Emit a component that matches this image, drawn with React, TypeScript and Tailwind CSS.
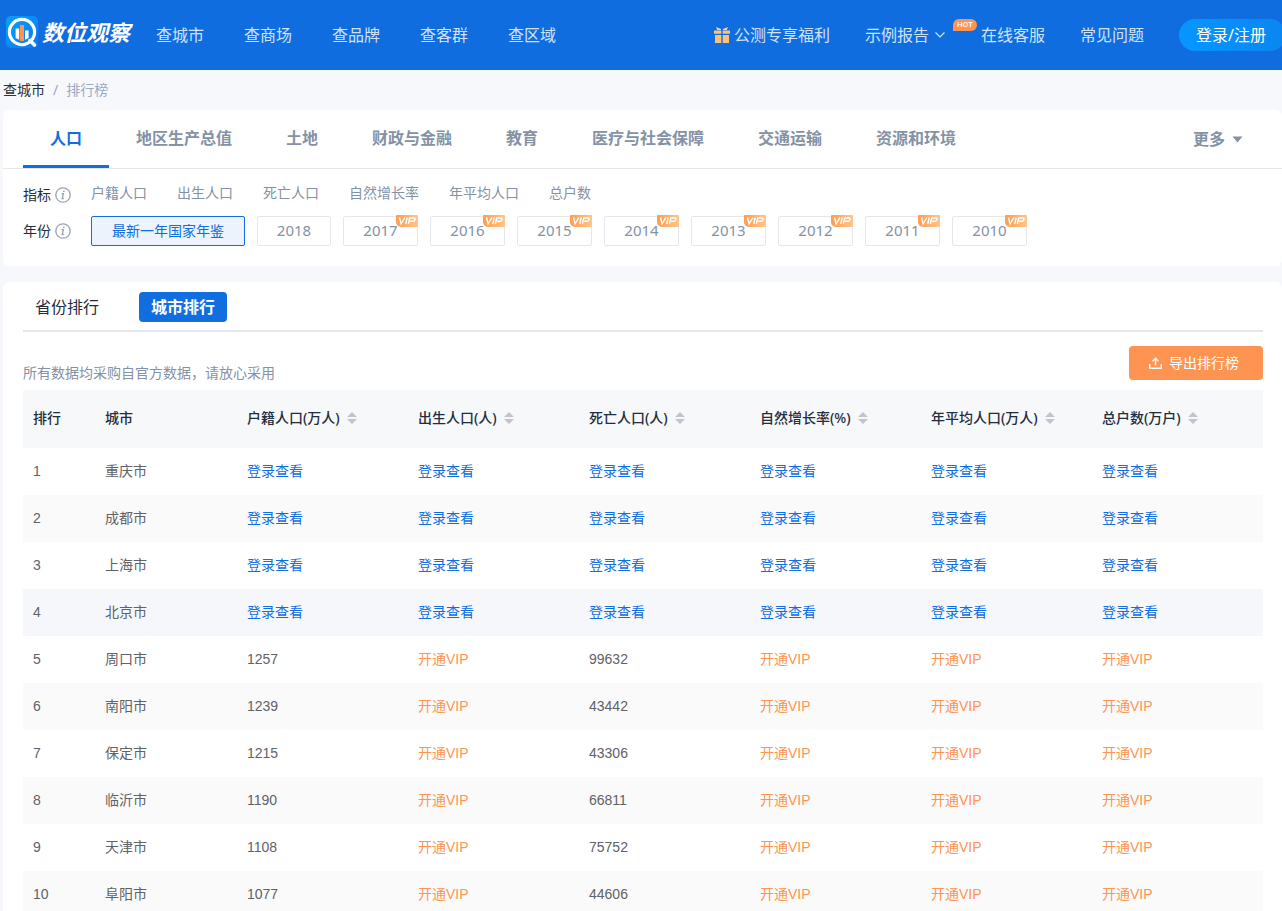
import React from 'react';

const navItems = ['查城市', '查商场', '查品牌', '查客群', '查区域'];
const categories = ['人口', '地区生产总值', '土地', '财政与金融', '教育', '医疗与社会保障', '交通运输', '资源和环境'];
const indicators = ['户籍人口', '出生人口', '死亡人口', '自然增长率', '年平均人口', '总户数'];
const years = ['2018', '2017', '2016', '2015', '2014', '2013', '2012', '2011', '2010'];
const columns = ['户籍人口(万人)', '出生人口(人)', '死亡人口(人)', '自然增长率(%)', '年平均人口(万人)', '总户数(万户)'];

interface CityRow {
  city: string;
  registered?: string;
  deaths?: string;
}

const rows: CityRow[] = [
  { city: '重庆市' },
  { city: '成都市' },
  { city: '上海市' },
  { city: '北京市' },
  { city: '周口市', registered: '1257', deaths: '99632' },
  { city: '南阳市', registered: '1239', deaths: '43442' },
  { city: '保定市', registered: '1215', deaths: '43306' },
  { city: '临沂市', registered: '1190', deaths: '66811' },
  { city: '天津市', registered: '1108', deaths: '75752' },
  { city: '阜阳市', registered: '1077', deaths: '44606' },
];

const Logo: React.FC = () => (
  <a href="#" className="flex items-center gap-1 pb-1.5 text-white">
    <svg width="32" height="32" viewBox="0 0 32 32" aria-hidden="true">
      <defs>
        <linearGradient id="logoBg" x1="0" y1="0" x2="1" y2="1">
          <stop offset="0" stopColor="#06a0ff" />
          <stop offset="1" stopColor="#0c78e8" />
        </linearGradient>
      </defs>
      <rect width="32" height="32" rx="5" fill="url(#logoBg)" />
      <circle cx="16" cy="16" r="12.6" fill="none" stroke="#fff" strokeWidth="3.2" />
      <path d="M24 24.5l4.5 4.5" stroke="#fff" strokeWidth="3.6" strokeLinecap="round" />
      <path d="M9.6 12.5h3.6v11.2l-3.6-1.6zM19 14.5h3.6v7.6L19 23.7z" fill="#fff" />
      <rect x="14" y="9" width="4" height="16" fill="#ff9350" />
    </svg>
    <span className="text-[22px] leading-8 font-bold italic whitespace-nowrap">数位观察</span>
  </a>
);

const GiftIcon: React.FC = () => (
  <svg width="16" height="16" viewBox="0 0 16 16" fill="#ffc078" aria-hidden="true">
    <path d="M0 3.6h7.3v3.2H0zM8.7 3.6H16v3.2H8.7zM1 8h6.3v8H1zM8.7 8H15v8H8.7z" />
    <path d="M2 0l5 2v1H3.2zM14 0L9 2v1h3.8z" fill="#ffcf96" />
  </svg>
);

const InfoIcon: React.FC = () => (
  <svg width="16" height="16" viewBox="0 0 16 16" fill="none" stroke="#98a3b5" aria-hidden="true">
    <circle cx="8" cy="8" r="7.2" strokeWidth="1.3" />
    <path d="M6.6 6.7h1.8l-1.2 4.8h1.6" strokeWidth="1.3" />
    <circle cx="8.8" cy="4.3" r="0.9" fill="#98a3b5" stroke="none" />
  </svg>
);

const SortIcon: React.FC = () => (
  <svg width="10" height="12" viewBox="0 0 10 12" fill="#c0c4cc" aria-hidden="true">
    <path d="M5 0l5 5H0zM5 12L0 7h10z" />
  </svg>
);

const VipBadge: React.FC = () => (
  <svg className="absolute -top-0.5 -right-px" width="22" height="12" viewBox="0 0 22 12" aria-label="VIP">
    <defs>
      <linearGradient id="vipBg" x1="0" y1="0" x2="1" y2="0">
        <stop offset="0" stopColor="#ff9c4e" />
        <stop offset="1" stopColor="#ffc58a" />
      </linearGradient>
    </defs>
    <path d="M1 0h20a1 1 0 011 1v10a1 1 0 01-1 1H5a5 5 0 01-5-5V1a1 1 0 011-1z" fill="url(#vipBg)" />
    <path
      d="M3.5 2.5l1.6 6.3 3.8-6.3M11.2 2.5L9.8 9M12.4 9l1.3-6h4.4q1.2 0 .9 1.5-.3 1.7-1.6 1.7h-3.3"
      fill="none"
      stroke="#fff"
      strokeWidth="1.4"
    />
  </svg>
);

const LockedCell: React.FC<{ login: boolean }> = ({ login }) =>
  login ? (
    <a href="#" className="text-[#106ee0]">登录查看</a>
  ) : (
    <a href="#" className="text-[#ff9452]">开通VIP</a>
  );

const Header: React.FC = () => (
  <header className="flex h-[70px] items-center justify-between overflow-hidden bg-[#0f6ddf] pl-1.5 text-base whitespace-nowrap text-[#cfe2f9]">
    <div className="flex items-center">
      <Logo />
      <nav className="ml-[26px] flex gap-10">
        {navItems.map((item) => (
          <a key={item} href="#">{item}</a>
        ))}
      </nav>
    </div>
    <div className="-mr-1 flex items-center gap-[35px]">
      <a href="#" className="flex items-center gap-1">
        <GiftIcon />
        公测专享福利
      </a>
      <div className="flex items-center">
        <button type="button" className="flex items-center gap-1.5">
          示例报告
          <svg width="10" height="6" viewBox="0 0 10 6" fill="none" stroke="currentColor" strokeWidth="1.2" aria-hidden="true">
            <path d="M.5.5L5 5 9.5.5" />
          </svg>
        </button>
        <a href="#" className="relative ml-9">
          <span className="absolute -top-1 -left-7 h-3 w-6 rounded-t-full rounded-br-full bg-[#ff9452] text-center font-[Roboto] text-[8px] leading-3 font-medium text-white">
            HOT
          </span>
          在线客服
        </a>
      </div>
      <a href="#">常见问题</a>
      <button type="button" className="h-8 rounded-full bg-linear-to-r from-[#0696ff] to-[#0a86f2] pr-5 pl-[17px] text-white">
        登录/注册
      </button>
    </div>
  </header>
);

const Filters: React.FC = () => (
  <section className="rounded-md bg-white pb-5">
    <div className="flex h-[59px] items-stretch justify-between border-b border-[#e4e7ed] px-5 text-base font-bold whitespace-nowrap text-[#8492a6]">
      <div className="flex">
        {categories.map((name, i) => (
          <button
            key={name}
            type="button"
            className={`border-b-3 px-[27px] ${i === 0 ? 'border-[#106ee0] text-[#106ee0]' : 'border-transparent'}`}
          >
            {name}
          </button>
        ))}
      </div>
      <button type="button" className="mr-[19px] flex items-center gap-[7px]">
        更多
        <svg width="11" height="7" viewBox="0 0 11 7" fill="currentColor" aria-hidden="true">
          <path d="M.5.5h10L5.5 6.5z" />
        </svg>
      </button>
    </div>
    <div className="mt-3 flex flex-col gap-[11px] px-5 text-sm whitespace-nowrap text-[#8492a6]">
      <div className="flex items-center">
        <span className="flex w-[68px] items-center gap-1 pt-1 text-[#1f2d3d]">指标<InfoIcon /></span>
        <div className="flex gap-[30px]">
          {indicators.map((name) => (
            <button key={name} type="button">{name}</button>
          ))}
        </div>
      </div>
      <div className="flex items-center">
        <span className="flex w-[68px] items-center gap-1 text-[#1f2d3d]">年份<InfoIcon /></span>
        <div className="flex gap-3">
          <button type="button" className="h-[30px] w-[154px] rounded-xs border border-[#106ee0] bg-[#ecf3fc] text-[#106ee0]">
            最新一年国家年鉴
          </button>
          {years.map((year, i) => (
            <button
              key={year}
              type="button"
              className={`relative h-[30px] rounded-xs border border-[#e4e7ed] text-[15px] ${i > 0 ? 'w-[75px]' : 'w-[74px]'}`}
            >
              {year}
              {i > 0 && <VipBadge />}
            </button>
          ))}
        </div>
      </div>
    </div>
  </section>
);

const RankTable: React.FC = () => (
  <table className="w-full table-fixed border-collapse text-left font-['Liberation_Sans','Noto_Sans_CJK_SC',sans-serif] text-sm whitespace-nowrap text-[#606266]">
    <colgroup>
      <col className="w-[72px]" />
      <col className="w-[142px]" />
      {columns.map((name) => (
        <col key={name} />
      ))}
    </colgroup>
    <thead className="bg-[#f6f8fa] font-['Noto_Sans','Noto_Sans_CJK_SC',sans-serif] text-[#1f2d3d]">
      <tr className="h-[58px]">
        <th className="px-2.5 pb-0.5 font-medium">排行</th>
        <th className="px-2.5 pb-0.5 font-medium">城市</th>
        {columns.map((name) => (
          <th key={name} className="px-2.5 pb-0.5 font-medium">
            <button type="button" className="flex items-center gap-[7px]">
              {name}
              <SortIcon />
            </button>
          </th>
        ))}
      </tr>
    </thead>
    <tbody>
      {rows.map((row, i) => {
        const login = i < 4;
        return (
          <tr key={row.city} className={`h-[47px] ${i === 3 ? 'bg-[#f5f7fa]' : i % 2 ? 'bg-[#fafafa]' : 'bg-white'}`}>
            <td className="px-2.5 pb-0.5">{i + 1}</td>
            <td className="px-2.5 pb-0.5">{row.city}</td>
            <td className="px-2.5 pb-0.5">{row.registered ?? <LockedCell login={login} />}</td>
            <td className="px-2.5 pb-0.5"><LockedCell login={login} /></td>
            <td className="px-2.5 pb-0.5">{row.deaths ?? <LockedCell login={login} />}</td>
            <td className="px-2.5 pb-0.5"><LockedCell login={login} /></td>
            <td className="px-2.5 pb-0.5"><LockedCell login={login} /></td>
            <td className="px-2.5 pb-0.5"><LockedCell login={login} /></td>
          </tr>
        );
      })}
    </tbody>
  </table>
);

export default function App() {
  return (
    <div className="min-h-screen bg-[#f6f8fc] font-['Noto_Sans','Noto_Sans_CJK_SC',sans-serif]">
      <Header />
      <main className="pl-[3px]">
        <nav className="flex h-10 items-center gap-2 text-sm text-[#99a9bf]">
          <a href="#" className="text-[#303133]">查城市</a>
          <span>/</span>
          <span>排行榜</span>
        </nav>
        <Filters />
        <section className="mt-4 rounded-md bg-white pr-[19px] pl-5">
          <div className="flex h-[50px] items-center gap-7 border-b-2 border-[#e4e7ed] pt-0.5 text-base text-[#1f2d3d]">
            <button type="button" className="px-3">省份排行</button>
            <button type="button" className="h-[30px] rounded bg-[#106ee0] px-3 font-bold text-white">城市排行</button>
          </div>
          <div className="flex h-[58px] items-center justify-between text-sm">
            <p className="pt-6 text-[#8492a6]">所有数据均采购自官方数据，请放心采用</p>
            <button type="button" className="mb-[-4px] flex h-[34px] items-center gap-[7px] rounded bg-[#ff9452] pr-6 pl-5 text-white">
              <svg width="13" height="12" viewBox="0 0 13 12" fill="none" stroke="currentColor" strokeWidth="1.4" aria-hidden="true">
                <path d="M.8 7v4.2h11.4V7M6.5 8.5V1.5M3.5 4.2l3-3 3 3" />
              </svg>
              导出排行榜
            </button>
          </div>
          <RankTable />
        </section>
      </main>
    </div>
  );
}
